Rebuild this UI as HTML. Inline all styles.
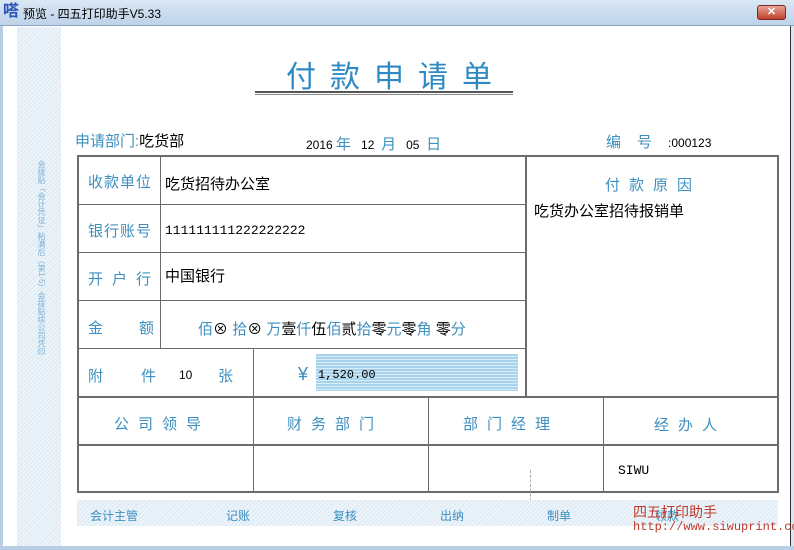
<!DOCTYPE html>
<html><head><meta charset="utf-8"><style>
*{margin:0;padding:0;box-sizing:border-box}
body{width:794px;height:550px;overflow:hidden;background:#fff;font-family:"Liberation Sans","Noto Sans CJK SC",sans-serif;position:relative}
.a{position:absolute}
.tb{left:0;top:0;width:794px;height:26px;background:linear-gradient(#dbe7f4,#bed3ea);border-bottom:1px solid #8ea6c2}
.stripe{background:repeating-linear-gradient(135deg,#d8e8f3 0,#d8e8f3 1px,#eef5fa 1px,#eef5fa 3px)}
.bl{color:#3d8fc0}
.l{position:absolute;background:#6b6b6b}
.t{position:absolute;font-size:15px;color:#3d8fc0;letter-spacing:0}
.k{position:absolute;font-size:14px;color:#000}
</style></head><body>
<div class="a tb"></div>
<div class="a" style="left:3px;top:3px;width:18px;height:18px;color:#2a56b8;font-size:16px;font-weight:bold;line-height:18px">嗒</div>
<div class="a" style="left:23px;top:5px;font-size:12px;color:#000">预览 - 四五打印助手V5.33</div>
<div class="a" style="left:757px;top:5px;width:29px;height:15px;background:linear-gradient(#e8a496,#c0412c);border:1px solid #7a2a20;border-radius:3px;color:#fff;font-size:11px;font-weight:bold;text-align:center;line-height:13px">✕</div>
<div class="a" style="left:0;top:26px;width:3px;height:524px;background:#b9cde3"></div>
<div class="a" style="left:790px;top:26px;width:4px;height:524px;background:#dde6ef;border-left:1px solid #333"></div>
<div class="a" style="left:0;top:546px;width:794px;height:4px;background:#b9cde3"></div>
<div class="a stripe" style="left:17px;top:27px;width:44px;height:519px"></div>
<div class="a bl" style="left:34px;top:160px;width:12px;font-size:8px;line-height:9px;writing-mode:vertical-rl;height:250px;color:#7fb0d4">会拨贴「会计凭证」粘满后（第1-5）会拨贴续公司凭印</div>

<div class="a bl" style="left:286px;top:52px;font-size:30px;letter-spacing:14px;color:#2f8ac4">付款申请单</div>
<div class="a" style="left:255px;top:91px;width:258px;height:2px;background:#555"></div>
<div class="a" style="left:255px;top:94px;width:258px;height:1px;background:#888"></div>

<div class="t" style="left:75px;top:130px">申请部门:<span style="color:#000">吃货部</span></div>
<div class="k" style="left:306px;top:133px;font-size:12px">2016 <span class="bl" style="font-size:15px">年</span>&nbsp;&nbsp; 12 &nbsp;<span class="bl" style="font-size:15px">月</span>&nbsp;&nbsp; 05 &nbsp;<span class="bl" style="font-size:15px">日</span></div>
<div class="t" style="left:606px;top:131px;letter-spacing:16px">编号<span style="color:#000;font-size:12px;letter-spacing:0">:000123</span></div>

<div class="l" style="left:77px;top:155px;width:702px;height:2px"></div>
<div class="l" style="left:77px;top:155px;width:2px;height:338px"></div>
<div class="l" style="left:777px;top:155px;width:2px;height:338px"></div>
<div class="l" style="left:77px;top:491px;width:702px;height:2px"></div>
<div class="l" style="left:77px;top:204px;width:449px;height:1px"></div>
<div class="l" style="left:77px;top:252px;width:449px;height:1px"></div>
<div class="l" style="left:77px;top:300px;width:449px;height:1px"></div>
<div class="l" style="left:77px;top:348px;width:449px;height:1px"></div>
<div class="l" style="left:77px;top:396px;width:702px;height:2px"></div>
<div class="l" style="left:77px;top:444px;width:702px;height:2px"></div>
<div class="l" style="left:160px;top:156px;width:1px;height:192px"></div>
<div class="l" style="left:525px;top:156px;width:2px;height:240px"></div>
<div class="l" style="left:253px;top:348px;width:1px;height:144px"></div>
<div class="l" style="left:428px;top:396px;width:1px;height:96px"></div>
<div class="l" style="left:603px;top:396px;width:1px;height:96px"></div>
<div class="a" style="left:530px;top:470px;width:0;height:36px;border-left:1px dashed #aaa"></div>

<div class="t" style="left:88px;top:171px;letter-spacing:1px">收款单位</div>
<div class="k" style="left:165px;top:173px;font-size:15px">吃货招待办公室</div>
<div class="t" style="left:88px;top:220px;letter-spacing:1px">银行账号</div>
<div class="k" style="left:165px;top:223px;font-size:13px;font-family:'Liberation Mono',monospace">111111111222222222</div>
<div class="t" style="left:88px;top:268px;letter-spacing:9px">开户行</div>
<div class="k" style="left:165px;top:265px;font-size:15px">中国银行</div>
<div class="t" style="left:88px;top:317px;letter-spacing:36px">金额</div>
<div class="t" style="left:198px;top:318px;font-size:15px">佰<span style="color:#000">⊗</span> 拾<span style="color:#000">⊗</span> 万<span style="color:#000">壹</span>仟<span style="color:#000">伍</span>佰<span style="color:#000">贰</span>拾<span style="color:#000">零</span>元<span style="color:#000">零</span>角 <span style="color:#000">零</span>分</div>
<div class="t" style="left:88px;top:365px;letter-spacing:38px">附件</div>
<div class="k" style="left:179px;top:368px;font-size:12px">10</div>
<div class="t" style="left:218px;top:365px">张</div>
<div class="t" style="left:298px;top:364px;font-size:18px">¥</div>
<div class="a" style="left:316px;top:354px;width:202px;height:37px;background:repeating-linear-gradient(#a9d3ec 0,#a9d3ec 2px,#d9edf8 2px,#d9edf8 3px)"></div>
<div class="k" style="left:318px;top:368px;font-size:12px;font-family:'Liberation Mono',monospace">1,520.00</div>
<div class="t" style="left:605px;top:174px;letter-spacing:9px">付款原因</div>
<div class="k" style="left:534px;top:200px;font-size:15px">吃货办公室招待报销单</div>

<div class="t" style="left:114px;top:413px;letter-spacing:9px">公司领导</div>
<div class="t" style="left:287px;top:413px;letter-spacing:9px">财务部门</div>
<div class="t" style="left:463px;top:413px;letter-spacing:9px">部门经理</div>
<div class="t" style="left:654px;top:414px;letter-spacing:9px">经办人</div>
<div class="k" style="left:618px;top:463px;font-size:13px;font-family:'Liberation Mono',monospace">SIWU</div>

<div class="a stripe" style="left:77px;top:500px;width:701px;height:26px"></div>
<div class="a bl" style="left:90px;top:507px;font-size:12px">会计主管</div>
<div class="a bl" style="left:226px;top:507px;font-size:12px">记账</div>
<div class="a bl" style="left:333px;top:507px;font-size:12px">复核</div>
<div class="a bl" style="left:440px;top:507px;font-size:12px">出纳</div>
<div class="a bl" style="left:547px;top:507px;font-size:12px">制单</div>
<div class="a bl" style="left:655px;top:507px;font-size:12px">领款</div>
<div class="a" style="left:633px;top:502px;font-size:14px;color:#c0392b">四五打印助手</div>
<div class="a" style="left:633px;top:520px;font-size:12px;color:#c0392b;font-family:'Liberation Mono',monospace;white-space:nowrap">http://www.siwuprint.co</div>
</body></html>
